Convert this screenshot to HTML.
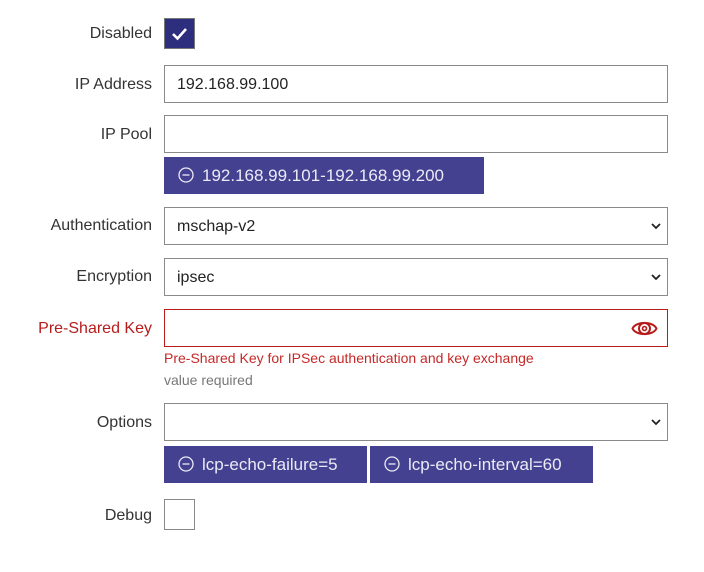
<html><head><style>
body{margin:0;background:#fff;font-family:"Liberation Sans",sans-serif;font-size:16px;color:#222}
.l{position:absolute;right:552px;text-align:right;color:#333;font-size:16px}
.i{position:absolute;left:164px;width:502px;height:36px;border:1px solid #8a8a8a;background:#fff;box-sizing:content-box}
.i span{position:absolute;left:12px;top:10px;font-size:16px;color:#222}
.c{position:absolute;height:37px;background:#434190;color:#eceaf6;font-size:17px;line-height:38px;box-sizing:border-box;padding-left:14px}
.c svg{vertical-align:-2px;margin-right:8px}
.dd{position:absolute;right:6px;top:14px}
</style></head><body>
<div class="l" style="top:25px">Disabled</div>
<div style="position:absolute;left:164px;top:18px;width:29px;height:29px;background:#2e2e7e;border:1px solid #777"><svg width="29" height="29"><path d="M8 15l4.5 4.5L21 10" stroke="#fff" stroke-width="2.6" fill="none"/></svg></div>

<div class="l" style="top:76px">IP Address</div>
<div class="i" style="top:65px"><span>192.168.99.100</span></div>

<div class="l" style="top:126px">IP Pool</div>
<div class="i" style="top:115px"></div>
<div class="c" style="left:164px;top:157px;width:320px"><svg width="16" height="16"><circle cx="8" cy="8" r="7" stroke="#eceaf6" stroke-width="1.3" fill="none"/><path d="M4.5 8h7" stroke="#eceaf6" stroke-width="1.3"/></svg>192.168.99.101-192.168.99.200</div>

<div class="l" style="top:217px">Authentication</div>
<div class="i" style="top:207px"><span>mschap-v2</span><svg class="dd" width="10" height="8"><path d="M1 2l4 4 4-4" stroke="#222" stroke-width="1.8" fill="none"/></svg></div>

<div class="l" style="top:268px">Encryption</div>
<div class="i" style="top:258px"><span>ipsec</span><svg class="dd" width="10" height="8"><path d="M1 2l4 4 4-4" stroke="#222" stroke-width="1.8" fill="none"/></svg></div>

<div class="l" style="top:320px;color:#b71c1c">Pre-Shared Key</div>
<div class="i" style="top:309px;border-color:#b71c1c"><svg style="position:absolute;right:9px;top:8px" width="27" height="21" viewBox="0 0 27 21"><path d="M1.5 10.5C5 3 22 3 25.5 10.5C22 18 5 18 1.5 10.5Z" stroke="#b71c1c" stroke-width="2" fill="none"/><circle cx="13.5" cy="10.5" r="5.5" stroke="#b71c1c" stroke-width="2" fill="none"/><circle cx="13.5" cy="10.5" r="2" stroke="#b71c1c" stroke-width="1.6" fill="none"/></svg></div>
<div style="position:absolute;left:164px;top:350px;font-size:14px;color:#c62828">Pre-Shared Key for IPSec authentication and key exchange</div>
<div style="position:absolute;left:164px;top:372px;font-size:14px;color:#777">value required</div>

<div class="l" style="top:414px">Options</div>
<div class="i" style="top:403px"><svg class="dd" width="10" height="8"><path d="M1 2l4 4 4-4" stroke="#222" stroke-width="1.8" fill="none"/></svg></div>
<div class="c" style="left:164px;top:446px;width:203px"><svg width="16" height="16"><circle cx="8" cy="8" r="7" stroke="#eceaf6" stroke-width="1.3" fill="none"/><path d="M4.5 8h7" stroke="#eceaf6" stroke-width="1.3"/></svg>lcp-echo-failure=5</div>
<div class="c" style="left:370px;top:446px;width:223px"><svg width="16" height="16"><circle cx="8" cy="8" r="7" stroke="#eceaf6" stroke-width="1.3" fill="none"/><path d="M4.5 8h7" stroke="#eceaf6" stroke-width="1.3"/></svg>lcp-echo-interval=60</div>

<div class="l" style="top:507px">Debug</div>
<div style="position:absolute;left:164px;top:499px;width:29px;height:29px;border:1px solid #888;background:#fff"></div>
</body></html>
